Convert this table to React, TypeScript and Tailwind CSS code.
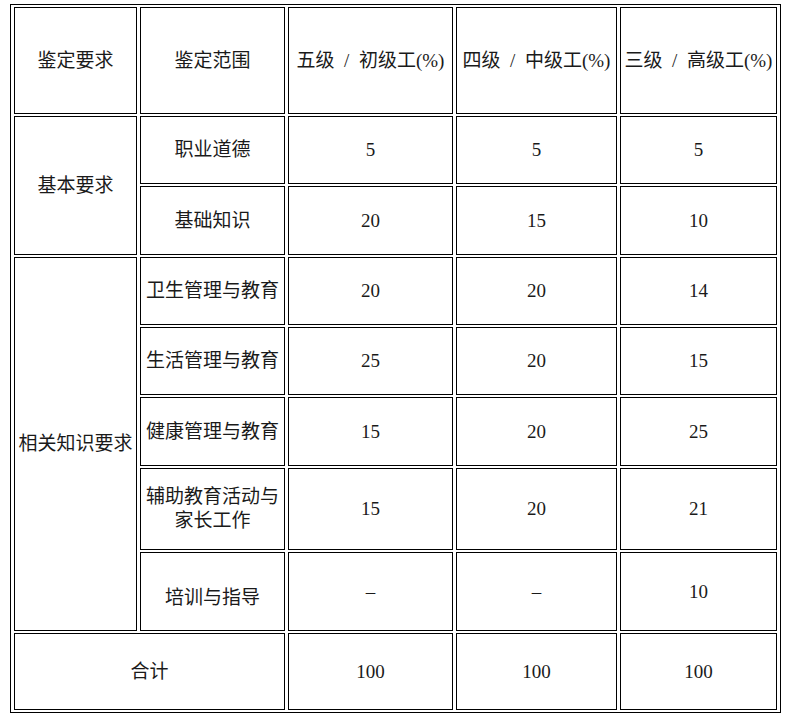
const rows: { range: string; values: string[]; h: string; extra?: string }[] = [
  { range: "职业道德", values: ["5", "5", "5"], h: "h-[68px]" },
  { range: "基础知识", values: ["20", "15", "10"], h: "h-[69px]" },
  { range: "卫生管理与教育", values: ["20", "20", "14"], h: "h-[68px]" },
  { range: "生活管理与教育", values: ["25", "20", "15"], h: "h-[68px]" },
  { range: "健康管理与教育", values: ["15", "20", "25"], h: "h-[69px]" },
  { range: "辅助教育活动与家长工作", values: ["15", "20", "21"], h: "h-[82px]" },
  { range: "培训与指导", values: ["–", "–", "10"], h: "h-[79px]", extra: "pt-[12px]" },
];

const cell = "border border-black px-[2px] text-center align-middle";

export default function App() {
  return (
    <div className="min-h-screen bg-white pl-[10px] pt-[4px]">
      <table
        className="w-[771px] table-fixed border-separate border-spacing-x-[3px] border-spacing-y-[2px] border border-black text-[19px] leading-[24px] text-[#1a1a1a]"
        style={{ fontFamily: '"Liberation Serif", "Noto Sans CJK SC", serif' }}
      >
        <colgroup>
          <col className="w-[123px]" />
          <col className="w-[145px]" />
          <col className="w-[165px]" />
          <col className="w-[161px]" />
          <col className="w-[157px]" />
        </colgroup>
        <tbody>
          <tr className="h-[107px]">
            <td className={cell}>鉴定要求</td>
            <td className={cell}>鉴定范围</td>
            <td className={cell}>五级&ensp;/&ensp;初级工(%)</td>
            <td className={cell}>四级&ensp;/&ensp;中级工(%)</td>
            <td className={cell}>三级&ensp;/&ensp;高级工(%)</td>
          </tr>
          {rows.map((row, i) => (
            <tr key={row.range} className={row.h}>
              {i === 0 && (
                <td className={cell} rowSpan={2}>
                  基本要求
                </td>
              )}
              {i === 2 && (
                <td className={cell} rowSpan={5}>
                  相关知识要求
                </td>
              )}
              <td className={`${cell} ${row.extra ?? ""}`}>{row.range}</td>
              {row.values.map((v, j) => (
                <td key={j} className={cell}>
                  {v}
                </td>
              ))}
            </tr>
          ))}
          <tr className="h-[77px]">
            <td className={cell} colSpan={2}>
              合计
            </td>
            <td className={cell}>100</td>
            <td className={cell}>100</td>
            <td className={cell}>100</td>
          </tr>
        </tbody>
      </table>
    </div>
  );
}
